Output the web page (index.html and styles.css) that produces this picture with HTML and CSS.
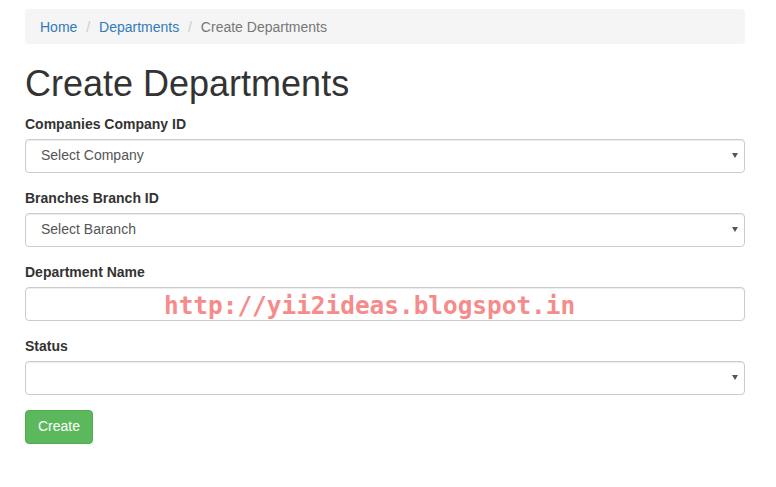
FILE: index.html
```html
<!DOCTYPE html>
<html>
<head>
  <title>Create Departments</title>
  <link rel="stylesheet" href="styles.css">
</head>
<body>
  <div class="container">
    <ul class="breadcrumb">
      <li><a href="#">Home</a></li>
      <li><a href="#">Departments</a></li>
      <li class="active">Create Departments</li>
    </ul>

    <h1>Create Departments</h1>

    <form class="department-form">
      <div class="form-group">
        <label class="control-label">Companies Company ID</label>
        <div class="select-wrap">
          <select class="form-control">
            <option>Select Company</option>
          </select>
        </div>
      </div>

      <div class="form-group">
        <label class="control-label">Branches Branch ID</label>
        <div class="select-wrap">
          <select class="form-control">
            <option>Select Baranch</option>
          </select>
        </div>
      </div>

      <div class="form-group">
        <label class="control-label">Department Name</label>
        <input type="text" class="form-control">
      </div>

      <div class="form-group">
        <label class="control-label">Status</label>
        <div class="select-wrap">
          <select class="form-control">
            <option></option>
          </select>
        </div>
      </div>

      <div class="form-group">
        <button type="button" class="btn btn-success">Create</button>
      </div>
    </form>

    <!-- blog watermark over the form -->
    <div class="watermark">http://yii2ideas.blogspot.in</div>
  </div>
</body>
</html>
```

FILE: styles.css
```css
body {
  margin: 0;
  font-family: "Liberation Sans", Arial, sans-serif;
  font-size: 14px;
  line-height: 1.42857;
  color: #333;
  background: #fff;
}
.container {
  position: relative;
  width: 720px;
  margin: 0 25px;
  padding-top: 9px;
}
.breadcrumb {
  list-style: none;
  margin: 0 0 20px;
  padding: 9px 15px 6px;
  background: #f5f5f5;
  border-radius: 4px;
}
.breadcrumb li {
  display: inline-block;
}
.breadcrumb li + li::before {
  content: "/\00a0";
  padding: 0 5px;
  color: #ccc;
}
.breadcrumb a {
  color: #337ab7;
  text-decoration: none;
}
.breadcrumb .active {
  color: #777;
}
h1 {
  font-size: 36px;
  font-weight: 500;
  line-height: 1.1;
  margin: 20px 0 10px;
}
.form-group {
  margin-bottom: 15px;
}
.control-label {
  display: block;
  font-weight: bold;
  padding-top: 1px;
  margin-bottom: 4px;
}
.form-control {
  display: block;
  box-sizing: border-box;
  width: 100%;
  height: 34px;
  padding: 6px 15px;
  font-family: inherit;
  font-size: 14px;
  line-height: 1.42857;
  color: #555;
  background: #fff;
  border: 1px solid #ccc;
  border-radius: 4px;
  box-shadow: inset 0 1px 1px rgba(0, 0, 0, 0.075);
  appearance: none;
  -webkit-appearance: none;
}
.select-wrap {
  position: relative;
}
.select-wrap::after {
  content: "";
  position: absolute;
  right: 7px;
  top: 14px;
  border-left: 3px solid transparent;
  border-right: 3px solid transparent;
  border-top: 5px solid #555;
  pointer-events: none;
}
.btn {
  display: inline-block;
  padding: 6px 12px;
  font-family: inherit;
  font-size: 14px;
  line-height: 1.42857;
  border: 1px solid transparent;
  border-radius: 4px;
  cursor: pointer;
}
.btn-success {
  color: #fff;
  background: #5cb85c;
  border-color: #4cae4c;
}
.watermark {
  position: absolute;
  left: 139px;
  top: 291px;
  font-family: "DejaVu Sans Mono", monospace;
  font-weight: bold;
  font-size: 24.4px;
  line-height: 30px;
  color: #f68b8b;
  white-space: nowrap;
  pointer-events: none;
}
```
